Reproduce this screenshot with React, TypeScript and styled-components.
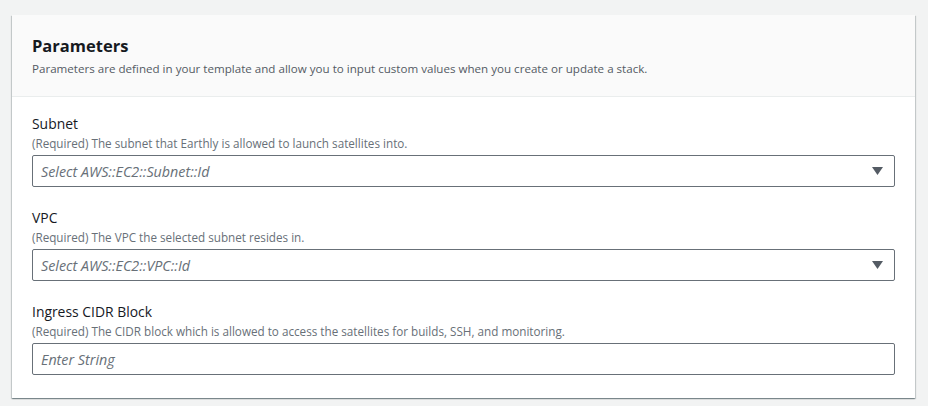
import styled, { createGlobalStyle } from 'styled-components'

const GlobalStyle = createGlobalStyle`
  html, body {
    margin: 0;
    padding: 0;
    background: #f2f3f3;
    font-family: "Open Sans", "Noto Sans", sans-serif;
    color: #16191f;
  }
`

const Page = styled.div`
  padding: 15px 13px 8px 12px;
`

const Card = styled.section`
  background: #ffffff;
  box-shadow: 0 1px 1px 0 rgba(0, 28, 36, 0.3), 1px 1px 1px 0 rgba(0, 28, 36, 0.15),
    -1px 1px 1px 0 rgba(0, 28, 36, 0.15);
`

const Header = styled.div`
  background: #fafafa;
  border-bottom: 1px solid #eaeded;
  padding: 20px 20px 18px 20px;
`

const Title = styled.h2`
  margin: 0;
  font-size: 16.5px;
  line-height: 22px;
  font-weight: 700;
  color: #16191f;
`

const Description = styled.p`
  margin: 3px 0 0 0;
  font-size: 11.6px;
  line-height: 18px;
  color: #545b64;
`

const Body = styled.div`
  display: flex;
  flex-direction: column;
  gap: 21px;
  padding: 17px 20px 23px 20px;
`

const Field = styled.div`
  display: flex;
  flex-direction: column;
`

const Label = styled.label`
  font-size: 13.9px;
  line-height: 20px;
  color: #16191f;
`

const Hint = styled.div`
  font-size: 11.7px;
  line-height: 18px;
  color: #687078;
`

const Control = styled.div`
  margin-top: 3px;
  height: 32px;
  box-sizing: border-box;
  border: 1px solid #687078;
  border-radius: 2px;
  background: #ffffff;
  display: flex;
  align-items: center;
  justify-content: space-between;
  padding: 0 11px 0 8px;
`

const Placeholder = styled.span`
  font-size: 14.3px;
  font-style: italic;
  color: #687078;
`

const Caret = () => (
  <svg width="11" height="8" viewBox="0 0 11 8">
    <path d="M0 0 H11 L5.5 8 Z" fill="#545b64" />
  </svg>
)

type Param = { label: string; hint: string; placeholder: string; select: boolean }

const params: Param[] = [
  {
    label: 'Subnet',
    hint: '(Required) The subnet that Earthly is allowed to launch satellites into.',
    placeholder: 'Select AWS::EC2::Subnet::Id',
    select: true,
  },
  {
    label: 'VPC',
    hint: '(Required) The VPC the selected subnet resides in.',
    placeholder: 'Select AWS::EC2::VPC::Id',
    select: true,
  },
  {
    label: 'Ingress CIDR Block',
    hint: '(Required) The CIDR block which is allowed to access the satellites for builds, SSH, and monitoring.',
    placeholder: 'Enter String',
    select: false,
  },
]

export default function App() {
  return (
    <>
      <GlobalStyle />
      <Page>
        <Card>
          <Header>
            <Title>Parameters</Title>
            <Description>
              Parameters are defined in your template and allow you to input custom values when you
              create or update a stack.
            </Description>
          </Header>
          <Body>
            {params.map((p) => (
              <Field key={p.label}>
                <Label>{p.label}</Label>
                <Hint>{p.hint}</Hint>
                <Control>
                  <Placeholder>{p.placeholder}</Placeholder>
                  {p.select && <Caret />}
                </Control>
              </Field>
            ))}
          </Body>
        </Card>
      </Page>
    </>
  )
}
